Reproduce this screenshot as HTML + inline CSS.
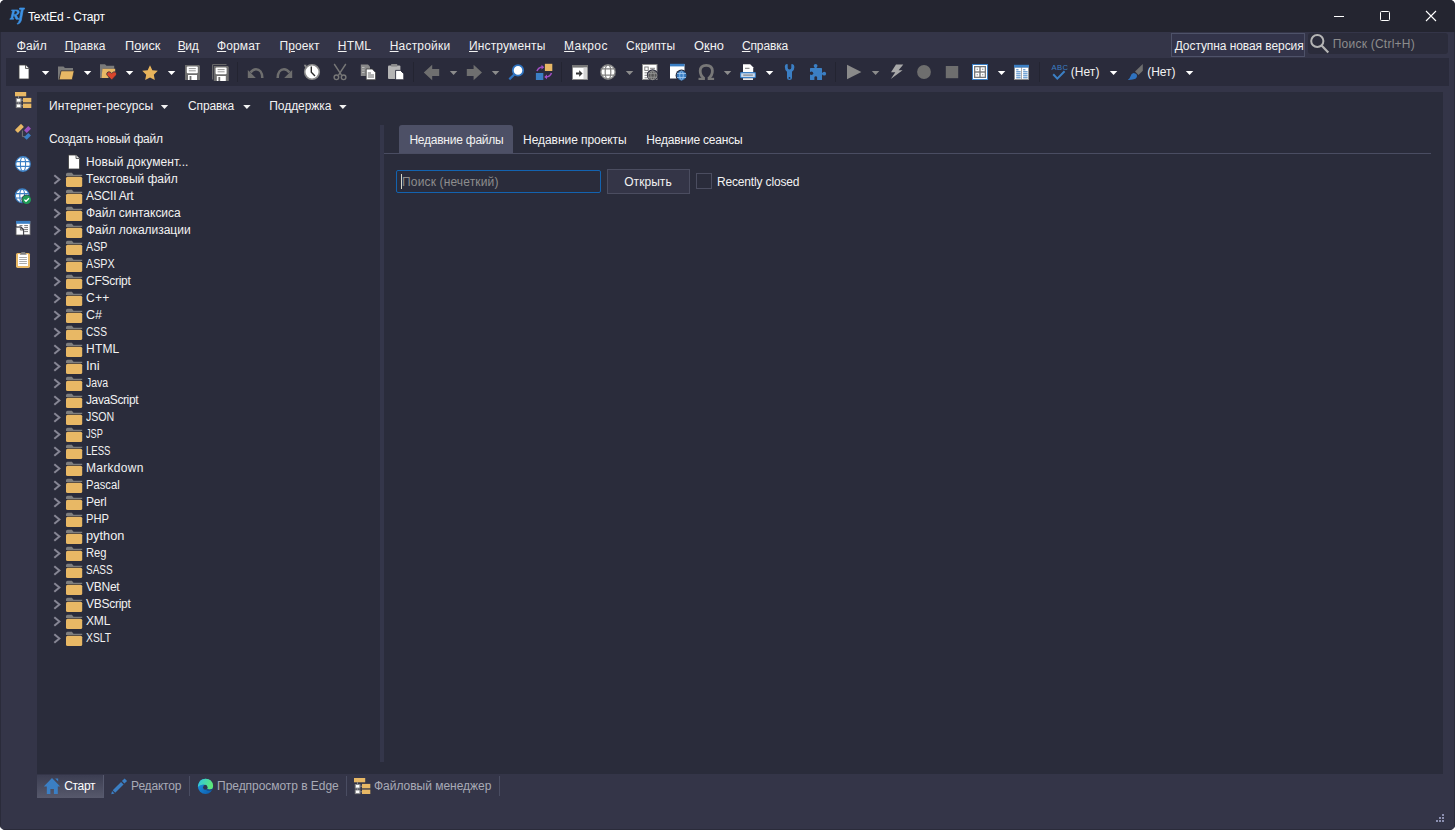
<!DOCTYPE html>
<html><head><meta charset="utf-8"><style>
*{box-sizing:border-box;margin:0;padding:0}
html,body{width:1455px;height:830px;overflow:hidden;background:#ffffff}
body{font-family:"Liberation Sans",sans-serif;font-size:12px;position:relative}
.a{position:absolute}
.t{position:absolute;white-space:pre;line-height:14px;font-size:12px}
.ul{text-decoration:underline;text-underline-offset:1px;text-decoration-thickness:1px}
#win{position:absolute;left:0;top:0;width:1455px;height:830px;background:#343548;border-radius:5px;overflow:hidden}
</style></head><body>
<div id="win">
<div class="a" style="left:0px;top:0px;width:1455px;height:32px;background:#242530;"></div>
<div class="a" style="left:0px;top:32px;width:1px;height:798px;background:#2a2b3a;"></div>
<div class="a" style="left:1454px;top:32px;width:1px;height:798px;background:#2a2b3a;"></div>
<div class="a" style="left:0px;top:829px;width:1455px;height:1px;background:#2a2b3a;"></div>
<div class="a" style="left:6px;top:58px;width:1443px;height:28px;background:#2a2b3b;"></div>
<div class="a" style="left:1171px;top:33px;width:134px;height:24px;background:#33344a;border:1px solid #4e5269;"></div>
<div class="a" style="left:1308px;top:33px;width:140px;height:21px;background:#2b2c3b;border-radius:3px;"></div>
<div class="a" style="left:37px;top:92px;width:1406px;height:682px;background:#2a2c3b;"></div>
<div class="a" style="left:380px;top:125px;width:4px;height:637px;background:#34364a;"></div>
<div class="a" style="left:384px;top:153px;width:1047px;height:1px;background:#4a4d62;"></div>
<div class="a" style="left:399px;top:125px;width:114px;height:28px;background:#4d5066;border-radius:3px 3px 0 0;"></div>
<div class="a" style="left:396px;top:170px;width:205px;height:23px;background:#2a2c3b;border:1px solid #1363b0;border-radius:2px;"></div>
<div class="a" style="left:401px;top:174px;width:1px;height:15px;background:#d8d8c8;"></div>
<div class="a" style="left:607px;top:169px;width:83px;height:25px;background:#343547;border:1px solid #4b4d60;"></div>
<div class="a" style="left:696px;top:173px;width:16px;height:16px;background:#2a2c3b;border:1px solid #4b4d60;"></div>
<div class="a" style="left:37px;top:775px;width:67px;height:23px;background:#4a4c5f;background:linear-gradient(#3c3e52,#57596c);"></div>
<div class="a" style="left:103px;top:775px;width:1px;height:23px;background:#56596e;"></div>
<div class="a" style="left:189px;top:776px;width:1px;height:20px;background:#4a4d62;"></div>
<div class="a" style="left:346px;top:776px;width:1px;height:20px;background:#4a4d62;"></div>
<div class="a" style="left:499px;top:776px;width:1px;height:20px;background:#4a4d62;"></div>
<svg class="a" style="left:0;top:0" width="1455" height="830"><path fill-rule="evenodd" fill="#3d93e6" stroke="#3d93e6" stroke-width="0.6" d="M11.6,9.9 L17.3,9.9 Q19.6,10.1 19.3,12.3 Q18.9,14.6 16.3,15 L18.2,18.5 L19.1,18.6 L18.9,19.3 L16,19.3 L14.1,15.2 L13.5,15.2 L12.8,18.5 L13.9,18.6 L13.7,19.3 L9.8,19.3 L10,18.6 L10.9,18.5 L12.6,10.7 L11.5,10.6 Z M14.6,10.8 L13.7,14.4 L15.1,14.4 Q17.1,14.2 17.3,12.4 Q17.4,10.8 15.9,10.8 Z"/><path fill="#3d93e6" stroke="#3d93e6" stroke-width="0.7" d="M19.6,8 L24.6,8 L24.3,9.3 L23.3,9.4 L21.2,20.8 Q20.5,23.4 17.6,24.2 L17.2,23.5 Q18.9,22.4 19.3,20.4 L21.3,9.4 L19.4,9.3 Z"/><rect x="1334" y="16" width="10" height="1" fill="#fff"/><rect x="1380.5" y="11.5" width="9" height="9" rx="1" fill="none" stroke="#fff" stroke-width="1"/><path d="M1426,11 L1436,21 M1436,11 L1426,21" stroke="#fff" stroke-width="1.1"/><circle cx="1317.3" cy="41" r="6.1" fill="none" stroke="#b4b4b4" stroke-width="2"/><line x1="1321.6" y1="45.5" x2="1328.3" y2="52.4" stroke="#b4b4b4" stroke-width="2.2"/><line x1="237.5" y1="62" x2="237.5" y2="82" stroke="#232431" stroke-width="1"/><line x1="413.5" y1="62" x2="413.5" y2="82" stroke="#232431" stroke-width="1"/><line x1="561.5" y1="62" x2="561.5" y2="82" stroke="#232431" stroke-width="1"/><line x1="835.5" y1="62" x2="835.5" y2="82" stroke="#232431" stroke-width="1"/><line x1="1039.5" y1="62" x2="1039.5" y2="82" stroke="#232431" stroke-width="1"/><path d="M19,65 H25.5 L29,68.5 V79 H19 Z" fill="#fff" stroke="#3c3c3c" stroke-width="0.8"/><path d="M25.5,65 V68.5 H29" fill="#e8e8e8" stroke="#555" stroke-width="0.9"/><polygon points="41.8,71 49.3,71 45.55,75" fill="#ffffff"/><polygon points="83.8,71 91.3,71 87.55,75" fill="#ffffff"/><polygon points="125.8,71 133.3,71 129.55,75" fill="#ffffff"/><polygon points="167.8,71 175.3,71 171.55,75" fill="#ffffff"/><polygon points="765.8,71 773.3,71 769.55,75" fill="#ffffff"/><polygon points="997.8,71 1005.3,71 1001.55,75" fill="#ffffff"/><polygon points="1109.8,71 1117.3,71 1113.55,75" fill="#ffffff"/><polygon points="1185.8,71 1193.3,71 1189.55,75" fill="#ffffff"/><polygon points="449.8,71 457.3,71 453.55,75" fill="#8c8c8c"/><polygon points="491.8,71 499.3,71 495.55,75" fill="#8c8c8c"/><polygon points="625.8,71 633.3,71 629.55,75" fill="#8c8c8c"/><polygon points="723.8,71 731.3,71 727.55,75" fill="#8c8c8c"/><polygon points="871.8,71 879.3,71 875.55,75" fill="#8c8c8c"/><path d="M58,66.5 H63.5 L65,68 H73 V71 H61.2 L59.2,79.8 H58 Z" fill="#7a7a7a"/><path d="M61,70.8 H74.2 L72.2,79.8 H59 Z" fill="#e8b865" stroke="#22232f" stroke-width="0.7"/><path d="M100,64.3 H105 L106.5,65.8 H114.2 V68.8 H102.6 L101.6,78 H100 Z" fill="#7a7a7a"/><path d="M102.4,68.8 H115.2 V72 L108,78 H101.5 Z" fill="#e8b865"/><path d="M111.7,80 L107.4,75.6 Q106.2,74.2 107,72.8 Q108,71.5 109.7,71.9 Q110.9,72.3 111.7,73.4 Q112.5,72.3 113.7,71.9 Q115.4,71.5 116.3,72.8 Q117.1,74.2 115.9,75.6 Z" fill="#d8452b" stroke="#2a2b3b" stroke-width="0.8"/><polygon points="150.00,65.20 152.35,70.16 157.80,70.87 153.80,74.64 154.82,80.03 150.00,77.40 145.18,80.03 146.20,74.64 142.20,70.87 147.65,70.16" fill="#e8b45c"/><path d="M185,65 H199 L200,66 V80 H185 Z" fill="#6e6e6e"/><rect x="186.8" y="66.5" width="11" height="6.8" rx="1" fill="#fff"/><line x1="188.8" y1="68.6" x2="195.8" y2="68.6" stroke="#8a8a8a" stroke-width="0.9"/><line x1="188.8" y1="70.8" x2="195.8" y2="70.8" stroke="#8a8a8a" stroke-width="0.9"/><rect x="188" y="75" width="9" height="5" fill="#fff"/><rect x="189.6" y="76" width="1.8" height="4" fill="#6e6e6e"/><path d="M212.6,79.5 V64.6 H226.5" fill="none" stroke="#6e6e6e" stroke-width="1"/><path d="M213.8,66 H227.8 L228.8,67 V81 H213.8 Z" fill="#6e6e6e"/><rect x="215.60000000000002" y="67.5" width="11" height="6.8" rx="1" fill="#fff"/><line x1="217.60000000000002" y1="69.6" x2="224.60000000000002" y2="69.6" stroke="#8a8a8a" stroke-width="0.9"/><line x1="217.60000000000002" y1="71.8" x2="224.60000000000002" y2="71.8" stroke="#8a8a8a" stroke-width="0.9"/><rect x="216.8" y="76" width="9" height="5" fill="#fff"/><rect x="218.4" y="77" width="1.8" height="4" fill="#6e6e6e"/><g><path d="M262.3,78 C262.3,72.5 259.5,69.3 256,69.3 C253.5,69.3 251.8,70.8 250.5,72.6" fill="none" stroke="#6e6e6e" stroke-width="2.6"/><polygon points="247.8,70 247.8,78 255.8,78" fill="#6e6e6e"/></g><g transform="translate(540,0) scale(-1,1)"><path d="M262.3,78 C262.3,72.5 259.5,69.3 256,69.3 C253.5,69.3 251.8,70.8 250.5,72.6" fill="none" stroke="#6e6e6e" stroke-width="2.6"/><polygon points="247.8,70 247.8,78 255.8,78" fill="#6e6e6e"/></g><circle cx="312" cy="72" r="7.3" fill="#fff" stroke="#8a8a8a" stroke-width="1.6"/><path d="M311.3,66.5 V72.3 L315,76" fill="none" stroke="#2a2a2a" stroke-width="1.4"/><path d="M303.8,64.8 L306.5,64.8 L305.5,68.5 Z" fill="#8a8a8a"/><path d="M334.2,64 L341.5,75.2 M345.8,64 L338.5,75.2" stroke="#777" stroke-width="1.4"/><circle cx="336.4" cy="77.3" r="2.3" fill="none" stroke="#777" stroke-width="1.4"/><circle cx="343.6" cy="77.3" r="2.3" fill="none" stroke="#777" stroke-width="1.4"/><path d="M360.8,64.5 H368 L370,66.5 V76 H360.8 Z" fill="#8a8a8a"/><line x1="362" y1="67.5" x2="364.5" y2="67.5" stroke="#bbb"/><line x1="362" y1="70" x2="364.5" y2="70" stroke="#bbb"/><line x1="362" y1="72.5" x2="364.5" y2="72.5" stroke="#bbb"/><path d="M366.2,69 H372.2 L375.6,72.4 V79.8 H366.2 Z" fill="#fff" stroke="#3a3a3a" stroke-width="0.8"/><path d="M367.8,73 H371 M367.8,75 H374 M367.8,77 H374" stroke="#555" stroke-width="0.9"/><rect x="388" y="65.5" width="12.4" height="13.5" rx="1" fill="#b4b4b4"/><rect x="391.2" y="64" width="6" height="2.6" fill="#8a8a8a"/><path d="M395.6,70.4 H400.4 L403.8,73.8 V79.8 H395.6 Z" fill="#fff" stroke="#2a2b3b" stroke-width="0.9"/><polygon points="423.8,72.5 432.2,64.8 432.2,69 439.2,69 439.2,76 432.2,76 432.2,80.2" fill="#6f6f6f"/><polygon points="482,72.5 473.6,64.8 473.6,69 466.8,69 466.8,76 473.6,76 473.6,80.2" fill="#6f6f6f"/><line x1="509.3" y1="79.4" x2="514.6" y2="74.1" stroke="#2f73c0" stroke-width="2.2"/><circle cx="518" cy="70.4" r="5.2" fill="#fff" stroke="#2f73c0" stroke-width="1.8"/><rect x="544.9" y="63.8" width="7.4" height="7.2" fill="#e8b865"/><rect x="535.9" y="73" width="7.4" height="7" fill="#3b7fc4"/><path d="M537,71 Q538.5,67.3 542.3,67" fill="none" stroke="#a14fc4" stroke-width="1.6"/><polygon points="541.5,64.8 544.3,67.2 541.5,69.4" fill="#a14fc4"/><path d="M551.5,73 Q550,76.7 546.2,77" fill="none" stroke="#a14fc4" stroke-width="1.6"/><polygon points="547,74.6 544.2,77 547,79.2" fill="#a14fc4"/><rect x="572.5" y="65.5" width="15" height="14" fill="#fff" stroke="#8a8a8a" stroke-width="1"/><rect x="572" y="65" width="16" height="2.6" fill="#777"/><rect x="583.5" y="67.6" width="3.6" height="11.5" fill="#d4d4d4"/><rect x="576" y="72.5" width="3.5" height="2" fill="#333"/><polygon points="579.2,70.2 582.6,73.5 579.2,76.8" fill="#333"/><circle cx="608" cy="72" r="7.10" fill="#fff" stroke="#8a8a8a" stroke-width="1.4"/><ellipse cx="608" cy="72" rx="2.81" ry="7.20" fill="none" stroke="#808080" stroke-width="1.2"/><path d="M600.70,68.88 H615.30 M600.70,75.12 H615.30" stroke="#808080" stroke-width="1.2"/><rect x="642.5" y="64.5" width="14.5" height="15" fill="#fff" stroke="#8a8a8a" stroke-width="1"/><rect x="644.8" y="67" width="3.4" height="3.4" fill="none" stroke="#777" stroke-width="0.9"/><path d="M650,68.3 H655 M644.5,72.8 H650 M644.5,75.3 H648.5 M644.5,77.8 H648.5" stroke="#777" stroke-width="0.9"/><circle cx="652.6" cy="75" r="5.8" fill="#2a2b3b"/><circle cx="652.6" cy="75.3" r="4.40" fill="#555" stroke="#8a8a8a" stroke-width="1"/><ellipse cx="652.6" cy="75.3" rx="1.76" ry="4.30" fill="none" stroke="#9a9a9a" stroke-width="0.8"/><path d="M648.20,73.34 H657.00 M648.20,77.26 H657.00" stroke="#9a9a9a" stroke-width="0.8"/><rect x="670" y="64" width="14.5" height="14.5" fill="#fff"/><rect x="670" y="63.8" width="14.5" height="2.6" fill="#3b7fc4"/><circle cx="681.5" cy="75.5" r="5.9" fill="#2a2b3b"/><circle cx="681.5" cy="75.5" r="4.50" fill="#3b7fc4" stroke="#2f6fb0" stroke-width="1"/><ellipse cx="681.5" cy="75.5" rx="1.80" ry="4.40" fill="none" stroke="#a8cbf0" stroke-width="0.8"/><path d="M677.00,73.50 H686.00 M677.00,77.50 H686.00" stroke="#a8cbf0" stroke-width="0.8"/><path d="M704.3,78.6 Q700.1,75.6 700.2,70.8 Q700.4,65.3 706.3,65.3 Q712.2,65.3 712.4,70.8 Q712.5,75.6 708.3,78.6" fill="none" stroke="#787878" stroke-width="2.8"/><rect x="698.5" y="77.8" width="6.4" height="2.2" fill="#787878"/><rect x="707.7" y="77.8" width="6.4" height="2.2" fill="#787878"/><path d="M743,64.3 H750.2 L753.2,67.3 V72 H743 Z" fill="#fff"/><path d="M745,68.3 H749.5" stroke="#666" stroke-width="0.9"/><rect x="740.6" y="72.6" width="14.8" height="5" rx="0.8" fill="#c9d9ec" stroke="#3b7fc4" stroke-width="1.1"/><path d="M743.2,75.1 H752.8" stroke="#777" stroke-width="1"/><rect x="743" y="78.3" width="10" height="1.6" fill="#fff"/><path d="M784.8,66.8 Q784.8,64.3 786.8,64 L787.7,64.2 V67.8 Q787.7,69.5 789.5,69.5 Q791.3,69.5 791.3,67.8 V64.2 L792.3,64 Q794.4,64.3 794.4,67 Q794.4,70.4 792,71.8 V78 Q792,80 789.5,80 Q787,80 787,78 V71.8 Q784.8,70.4 784.8,66.8 Z" fill="#3b7fc4"/><circle cx="789.5" cy="77.9" r="0.9" fill="#2a2b3b"/><rect x="810" y="68" width="12" height="12" rx="0.6" fill="#3b7fc4"/><circle cx="815.6" cy="65.8" r="1.9" fill="#3b7fc4"/><rect x="814.7" y="66.5" width="1.8" height="2" fill="#3b7fc4"/><circle cx="824.2" cy="73.7" r="1.9" fill="#3b7fc4"/><rect x="821.5" y="72.9" width="2" height="1.6" fill="#3b7fc4"/><circle cx="811.4" cy="73.2" r="1.8" fill="#2a2b3b"/><path d="M814.4,80 V77.6 Q814.4,76.3 815.75,76.3 Q817.1,76.3 817.1,77.6 V80 Z" fill="#2a2b3b"/><polygon points="847,64.8 861.4,72 847,79.2" fill="#8a8a8a"/><path d="M896,64.6 H903.3 L898.6,70.2 H902.6 L890.8,79 L895.3,72.3 H891 Z" fill="#a8a8a8"/><circle cx="924" cy="72" r="6.9" fill="#6e6e6e"/><rect x="945.8" y="66" width="12.4" height="12.2" fill="#6e6e6e"/><rect x="972" y="64" width="16" height="16" fill="#3b7fc4"/><rect x="973" y="65" width="14" height="14" fill="#fff"/><rect x="974" y="66" width="12" height="12" fill="#777"/><rect x="975.3" y="67.3" width="4" height="4" fill="#fff"/><rect x="976.5999999999999" y="68.6" width="1.4" height="1.4" fill="#aaa"/><rect x="975.3" y="72.7" width="4" height="4" fill="#fff"/><rect x="976.5999999999999" y="74.0" width="1.4" height="1.4" fill="#aaa"/><rect x="980.7" y="67.3" width="4" height="4" fill="#fff"/><rect x="982.0" y="68.6" width="1.4" height="1.4" fill="#aaa"/><rect x="980.7" y="72.7" width="4" height="4" fill="#fff"/><rect x="982.0" y="74.0" width="1.4" height="1.4" fill="#aaa"/><rect x="1014" y="65" width="15" height="15" fill="#8a8a8a"/><rect x="1015" y="67.5" width="6.2" height="11.5" fill="#fff"/><rect x="1021.9" y="67.5" width="6.2" height="11.5" fill="#fff"/><rect x="1014" y="64.8" width="15" height="2.7" fill="#3b7fc4"/><rect x="1016.2" y="69.3" width="2.3" height="1" fill="#3b7fc4"/><rect x="1023.1" y="69.3" width="2.3" height="1" fill="#3b7fc4"/><rect x="1016.2" y="71.3" width="4.5" height="1" fill="#3b7fc4"/><rect x="1023.1" y="71.3" width="4.5" height="1" fill="#3b7fc4"/><rect x="1016.2" y="73.3" width="4.5" height="1" fill="#3b7fc4"/><rect x="1023.1" y="73.3" width="4.5" height="1" fill="#3b7fc4"/><rect x="1016.2" y="75.3" width="4.5" height="1" fill="#3b7fc4"/><rect x="1023.1" y="75.3" width="4.5" height="1" fill="#3b7fc4"/><rect x="1016.2" y="77.3" width="4.5" height="1" fill="#3b7fc4"/><rect x="1023.1" y="77.3" width="4.5" height="1" fill="#3b7fc4"/><text x="1051.5" y="70.2" font-family="Liberation Sans" font-size="7.6" letter-spacing="0.45" fill="#3b7fc4">ABC</text><path d="M1053.2,74.3 L1057.3,78.6 L1064.6,71.3" fill="none" stroke="#3b7fc4" stroke-width="2"/><polygon points="1142.8,64 1142.8,70.7 1138.5,74.9 1135,71.4" fill="#6f6f6f"/><path d="M1133.5,73 Q1135.6,73 1136.9,74.8 Q1137.6,77 1135.5,78.8 Q1133,80 1127.8,79.9 Q1130,78.3 1130.5,76.2 Q1131.3,73.3 1133.5,73 Z" fill="#2f73c0"/><polygon points="160.8,105 168.20000000000002,105 164.5,109" fill="#f2f2f2"/><polygon points="243.2,105 250.6,105 246.89999999999998,109" fill="#f2f2f2"/><polygon points="339.2,105 346.59999999999997,105 342.9,109" fill="#f2f2f2"/><rect x="15" y="92" width="11.2" height="4.3" fill="#e8b865"/><line x1="18.5" y1="96" x2="18.5" y2="106" stroke="#8a8a8a" stroke-width="1"/><rect x="16.3" y="98.5" width="4.6" height="3.6" fill="#fff" stroke="#8a8a8a" stroke-width="1"/><rect x="16.3" y="104" width="4.6" height="3.6" fill="#fff" stroke="#8a8a8a" stroke-width="1"/><line x1="21" y1="100.2" x2="23" y2="100.2" stroke="#8a8a8a"/><line x1="21" y1="105.8" x2="23" y2="105.8" stroke="#8a8a8a"/><rect x="23" y="97.9" width="8.3" height="4.4" fill="#e8b865"/><rect x="23" y="103.6" width="8.3" height="4.4" fill="#e8b865"/><path d="M22.4,130.5 V136.6 H25" fill="none" stroke="#777" stroke-width="1"/><rect x="15.15" y="126.3" width="8.6" height="4.2" rx="0.6" transform="rotate(-45 19.45 128.4)" fill="#e8b865"/><rect x="24.5" y="127.6" width="6" height="3.8" transform="rotate(-45 27.5 129.5)" fill="#9d52bf"/><rect x="24.5" y="134.5" width="6" height="3.8" transform="rotate(-45 27.5 136.4)" fill="#3b7fc4"/><circle cx="23" cy="164" r="7.3" fill="#fff" stroke="#3b7fc4" stroke-width="1.2"/><ellipse cx="23" cy="164" rx="2.6" ry="7" fill="none" stroke="#3b7fc4" stroke-width="1.1"/><path d="M16,161.6 H30 M16,166.4 H30" stroke="#3b7fc4" stroke-width="1.1"/><circle cx="22.2" cy="195.8" r="6.9" fill="#fff" stroke="#3b7fc4" stroke-width="1.2"/><ellipse cx="22.2" cy="195.8" rx="2.4" ry="6.6" fill="none" stroke="#3b7fc4" stroke-width="1.1"/><path d="M16,193.6 H28.5 M16,198 H28.5" stroke="#3b7fc4" stroke-width="1.1"/><circle cx="26.6" cy="199.6" r="5.2" fill="#343548"/><circle cx="26.6" cy="199.6" r="4.4" fill="#1f9d57"/><path d="M24.4,199.6 L26,201.3 L29,198.2" fill="none" stroke="#fff" stroke-width="1.3"/><rect x="16.4" y="221.5" width="13.6" height="13.2" fill="#fff" stroke="#8a8a8a" stroke-width="0.8"/><rect x="16" y="220.9" width="14.2" height="2.9" fill="#3b7fc4"/><path d="M24.2,225.6 H28 M24.2,227.6 H28 M24.2,229.6 H28 M24.2,231.6 H28 M19.5,225.6 H22.5" stroke="#777" stroke-width="1"/><path d="M15.7,227 H21 L23.6,229.6 V235.4 H15.7 Z" fill="#fff" stroke="#2a2b3b" stroke-width="1.1"/><path d="M15.9,227.2 H20.9 L23.4,229.7 V235.2 H15.9 Z" fill="none" stroke="#666" stroke-width="0.5"/><path d="M20.4,227.4 V230.1 H23.2 Z" fill="#c4c4c4" stroke="#555" stroke-width="0.8"/><rect x="16" y="252.9" width="14" height="15" rx="1.6" fill="#e8b865"/><rect x="18" y="254.1" width="10" height="11.9" fill="#fff"/><rect x="19.2" y="257" width="7.7" height="1" fill="#aaa"/><rect x="19.2" y="259" width="7.7" height="1" fill="#aaa"/><rect x="19.2" y="261" width="7.7" height="1" fill="#aaa"/><rect x="19.2" y="263" width="7.7" height="1" fill="#aaa"/><path d="M19.7,254.7 L21.6,251.9 H24.9 L26.8,254.7 Z" fill="#808080"/><path d="M68.5,155 H76 L79.5,158.5 V169 H68.5 Z" fill="#fff" stroke="#3c3c3c" stroke-width="0.8"/><path d="M76,155 V158.5 H79.5" fill="#e6e6e6" stroke="#555" stroke-width="0.9"/><polyline points="54.3,175.2 59.4,179.5 54.3,183.8" fill="none" stroke="#868694" stroke-width="2"/><path d="M66,174.3 Q66,172.8 67.6,172.8 H71.9 L73.5,174.8 H82.2 V175.9 H66 Z" fill="#7e7e7e"/><rect x="66" y="176.8" width="16.2" height="10.3" rx="1.5" fill="#e8b865"/><polyline points="54.3,192.2 59.4,196.5 54.3,200.8" fill="none" stroke="#868694" stroke-width="2"/><path d="M66,191.3 Q66,189.8 67.6,189.8 H71.9 L73.5,191.8 H82.2 V192.9 H66 Z" fill="#7e7e7e"/><rect x="66" y="193.8" width="16.2" height="10.3" rx="1.5" fill="#e8b865"/><polyline points="54.3,209.2 59.4,213.5 54.3,217.8" fill="none" stroke="#868694" stroke-width="2"/><path d="M66,208.3 Q66,206.8 67.6,206.8 H71.9 L73.5,208.8 H82.2 V209.9 H66 Z" fill="#7e7e7e"/><rect x="66" y="210.8" width="16.2" height="10.3" rx="1.5" fill="#e8b865"/><polyline points="54.3,226.2 59.4,230.5 54.3,234.8" fill="none" stroke="#868694" stroke-width="2"/><path d="M66,225.3 Q66,223.8 67.6,223.8 H71.9 L73.5,225.8 H82.2 V226.9 H66 Z" fill="#7e7e7e"/><rect x="66" y="227.8" width="16.2" height="10.3" rx="1.5" fill="#e8b865"/><polyline points="54.3,243.2 59.4,247.5 54.3,251.8" fill="none" stroke="#868694" stroke-width="2"/><path d="M66,242.3 Q66,240.8 67.6,240.8 H71.9 L73.5,242.8 H82.2 V243.9 H66 Z" fill="#7e7e7e"/><rect x="66" y="244.8" width="16.2" height="10.3" rx="1.5" fill="#e8b865"/><polyline points="54.3,260.2 59.4,264.5 54.3,268.8" fill="none" stroke="#868694" stroke-width="2"/><path d="M66,259.3 Q66,257.8 67.6,257.8 H71.9 L73.5,259.8 H82.2 V260.9 H66 Z" fill="#7e7e7e"/><rect x="66" y="261.8" width="16.2" height="10.3" rx="1.5" fill="#e8b865"/><polyline points="54.3,277.2 59.4,281.5 54.3,285.8" fill="none" stroke="#868694" stroke-width="2"/><path d="M66,276.3 Q66,274.8 67.6,274.8 H71.9 L73.5,276.8 H82.2 V277.9 H66 Z" fill="#7e7e7e"/><rect x="66" y="278.8" width="16.2" height="10.3" rx="1.5" fill="#e8b865"/><polyline points="54.3,294.2 59.4,298.5 54.3,302.8" fill="none" stroke="#868694" stroke-width="2"/><path d="M66,293.3 Q66,291.8 67.6,291.8 H71.9 L73.5,293.8 H82.2 V294.9 H66 Z" fill="#7e7e7e"/><rect x="66" y="295.8" width="16.2" height="10.3" rx="1.5" fill="#e8b865"/><polyline points="54.3,311.2 59.4,315.5 54.3,319.8" fill="none" stroke="#868694" stroke-width="2"/><path d="M66,310.3 Q66,308.8 67.6,308.8 H71.9 L73.5,310.8 H82.2 V311.9 H66 Z" fill="#7e7e7e"/><rect x="66" y="312.8" width="16.2" height="10.3" rx="1.5" fill="#e8b865"/><polyline points="54.3,328.2 59.4,332.5 54.3,336.8" fill="none" stroke="#868694" stroke-width="2"/><path d="M66,327.3 Q66,325.8 67.6,325.8 H71.9 L73.5,327.8 H82.2 V328.9 H66 Z" fill="#7e7e7e"/><rect x="66" y="329.8" width="16.2" height="10.3" rx="1.5" fill="#e8b865"/><polyline points="54.3,345.2 59.4,349.5 54.3,353.8" fill="none" stroke="#868694" stroke-width="2"/><path d="M66,344.3 Q66,342.8 67.6,342.8 H71.9 L73.5,344.8 H82.2 V345.9 H66 Z" fill="#7e7e7e"/><rect x="66" y="346.8" width="16.2" height="10.3" rx="1.5" fill="#e8b865"/><polyline points="54.3,362.2 59.4,366.5 54.3,370.8" fill="none" stroke="#868694" stroke-width="2"/><path d="M66,361.3 Q66,359.8 67.6,359.8 H71.9 L73.5,361.8 H82.2 V362.9 H66 Z" fill="#7e7e7e"/><rect x="66" y="363.8" width="16.2" height="10.3" rx="1.5" fill="#e8b865"/><polyline points="54.3,379.2 59.4,383.5 54.3,387.8" fill="none" stroke="#868694" stroke-width="2"/><path d="M66,378.3 Q66,376.8 67.6,376.8 H71.9 L73.5,378.8 H82.2 V379.9 H66 Z" fill="#7e7e7e"/><rect x="66" y="380.8" width="16.2" height="10.3" rx="1.5" fill="#e8b865"/><polyline points="54.3,396.2 59.4,400.5 54.3,404.8" fill="none" stroke="#868694" stroke-width="2"/><path d="M66,395.3 Q66,393.8 67.6,393.8 H71.9 L73.5,395.8 H82.2 V396.9 H66 Z" fill="#7e7e7e"/><rect x="66" y="397.8" width="16.2" height="10.3" rx="1.5" fill="#e8b865"/><polyline points="54.3,413.2 59.4,417.5 54.3,421.8" fill="none" stroke="#868694" stroke-width="2"/><path d="M66,412.3 Q66,410.8 67.6,410.8 H71.9 L73.5,412.8 H82.2 V413.9 H66 Z" fill="#7e7e7e"/><rect x="66" y="414.8" width="16.2" height="10.3" rx="1.5" fill="#e8b865"/><polyline points="54.3,430.2 59.4,434.5 54.3,438.8" fill="none" stroke="#868694" stroke-width="2"/><path d="M66,429.3 Q66,427.8 67.6,427.8 H71.9 L73.5,429.8 H82.2 V430.9 H66 Z" fill="#7e7e7e"/><rect x="66" y="431.8" width="16.2" height="10.3" rx="1.5" fill="#e8b865"/><polyline points="54.3,447.2 59.4,451.5 54.3,455.8" fill="none" stroke="#868694" stroke-width="2"/><path d="M66,446.3 Q66,444.8 67.6,444.8 H71.9 L73.5,446.8 H82.2 V447.9 H66 Z" fill="#7e7e7e"/><rect x="66" y="448.8" width="16.2" height="10.3" rx="1.5" fill="#e8b865"/><polyline points="54.3,464.2 59.4,468.5 54.3,472.8" fill="none" stroke="#868694" stroke-width="2"/><path d="M66,463.3 Q66,461.8 67.6,461.8 H71.9 L73.5,463.8 H82.2 V464.9 H66 Z" fill="#7e7e7e"/><rect x="66" y="465.8" width="16.2" height="10.3" rx="1.5" fill="#e8b865"/><polyline points="54.3,481.2 59.4,485.5 54.3,489.8" fill="none" stroke="#868694" stroke-width="2"/><path d="M66,480.3 Q66,478.8 67.6,478.8 H71.9 L73.5,480.8 H82.2 V481.9 H66 Z" fill="#7e7e7e"/><rect x="66" y="482.8" width="16.2" height="10.3" rx="1.5" fill="#e8b865"/><polyline points="54.3,498.2 59.4,502.5 54.3,506.8" fill="none" stroke="#868694" stroke-width="2"/><path d="M66,497.3 Q66,495.8 67.6,495.8 H71.9 L73.5,497.8 H82.2 V498.9 H66 Z" fill="#7e7e7e"/><rect x="66" y="499.8" width="16.2" height="10.3" rx="1.5" fill="#e8b865"/><polyline points="54.3,515.2 59.4,519.5 54.3,523.8" fill="none" stroke="#868694" stroke-width="2"/><path d="M66,514.3 Q66,512.8 67.6,512.8 H71.9 L73.5,514.8 H82.2 V515.9 H66 Z" fill="#7e7e7e"/><rect x="66" y="516.8" width="16.2" height="10.3" rx="1.5" fill="#e8b865"/><polyline points="54.3,532.2 59.4,536.5 54.3,540.8" fill="none" stroke="#868694" stroke-width="2"/><path d="M66,531.3 Q66,529.8 67.6,529.8 H71.9 L73.5,531.8 H82.2 V532.9 H66 Z" fill="#7e7e7e"/><rect x="66" y="533.8" width="16.2" height="10.3" rx="1.5" fill="#e8b865"/><polyline points="54.3,549.2 59.4,553.5 54.3,557.8" fill="none" stroke="#868694" stroke-width="2"/><path d="M66,548.3 Q66,546.8 67.6,546.8 H71.9 L73.5,548.8 H82.2 V549.9 H66 Z" fill="#7e7e7e"/><rect x="66" y="550.8" width="16.2" height="10.3" rx="1.5" fill="#e8b865"/><polyline points="54.3,566.2 59.4,570.5 54.3,574.8" fill="none" stroke="#868694" stroke-width="2"/><path d="M66,565.3 Q66,563.8 67.6,563.8 H71.9 L73.5,565.8 H82.2 V566.9 H66 Z" fill="#7e7e7e"/><rect x="66" y="567.8" width="16.2" height="10.3" rx="1.5" fill="#e8b865"/><polyline points="54.3,583.2 59.4,587.5 54.3,591.8" fill="none" stroke="#868694" stroke-width="2"/><path d="M66,582.3 Q66,580.8 67.6,580.8 H71.9 L73.5,582.8 H82.2 V583.9 H66 Z" fill="#7e7e7e"/><rect x="66" y="584.8" width="16.2" height="10.3" rx="1.5" fill="#e8b865"/><polyline points="54.3,600.2 59.4,604.5 54.3,608.8" fill="none" stroke="#868694" stroke-width="2"/><path d="M66,599.3 Q66,597.8 67.6,597.8 H71.9 L73.5,599.8 H82.2 V600.9 H66 Z" fill="#7e7e7e"/><rect x="66" y="601.8" width="16.2" height="10.3" rx="1.5" fill="#e8b865"/><polyline points="54.3,617.2 59.4,621.5 54.3,625.8" fill="none" stroke="#868694" stroke-width="2"/><path d="M66,616.3 Q66,614.8 67.6,614.8 H71.9 L73.5,616.8 H82.2 V617.9 H66 Z" fill="#7e7e7e"/><rect x="66" y="618.8" width="16.2" height="10.3" rx="1.5" fill="#e8b865"/><polyline points="54.3,634.2 59.4,638.5 54.3,642.8" fill="none" stroke="#868694" stroke-width="2"/><path d="M66,633.3 Q66,631.8 67.6,631.8 H71.9 L73.5,633.8 H82.2 V634.9 H66 Z" fill="#7e7e7e"/><rect x="66" y="635.8" width="16.2" height="10.3" rx="1.5" fill="#e8b865"/><path d="M43.8,786.5 L52,778 L60.2,786.5 H57.8 V794 H53.9 V789 H50.4 V794 H46.8 V786.5 Z" fill="#3b7fc4"/><polygon points="55.2,778.4 58.2,778.4 58.2,781.6" fill="#3b7fc4"/><g transform="translate(119.2,786.3) rotate(-45)" fill="#3b7fc4"><rect x="-7.4" y="-1.75" width="11.8" height="3.5"/><rect x="5.6" y="-1.75" width="3.8" height="3.5"/><polygon points="-8.4,-1.75 -8.4,1.75 -11.2,0"/></g><defs><linearGradient id="eb" x1="0" y1="0" x2="1" y2="1"><stop offset="0" stop-color="#1f9ae8"/><stop offset="1" stop-color="#0b58a8"/></linearGradient><linearGradient id="eg" x1="0" y1="0" x2="1" y2="0.3"><stop offset="0" stop-color="#2ec3e6"/><stop offset="1" stop-color="#5de878"/></linearGradient></defs><circle cx="205.5" cy="786.4" r="7.6" fill="url(#eb)"/><path d="M198,785.2 Q199.6,778.8 205.6,778.8 Q212.2,778.9 213.1,785.6 Q213.2,789.5 209.6,789.5 Q207,789.4 206.9,787.2 Q206.6,784.3 203.2,784.4 Q199.8,784.6 198,786.8 Z" fill="url(#eg)"/><ellipse cx="205.3" cy="787.2" rx="2.2" ry="2.5" fill="#2e3650"/><path d="M206.6,789.9 Q209.5,790.4 212.3,789.6" fill="none" stroke="#243050" stroke-width="0.8"/><rect x="354" y="778" width="11.2" height="4.3" fill="#e8b865"/><line x1="357.5" y1="782" x2="357.5" y2="792" stroke="#8a8a8a" stroke-width="1"/><rect x="355.3" y="784.5" width="4.6" height="3.6" fill="#fff" stroke="#8a8a8a" stroke-width="1"/><rect x="355.3" y="790" width="4.6" height="3.6" fill="#fff" stroke="#8a8a8a" stroke-width="1"/><line x1="360" y1="786.2" x2="362" y2="786.2" stroke="#8a8a8a"/><line x1="360" y1="791.8" x2="362" y2="791.8" stroke="#8a8a8a"/><rect x="362" y="783.9" width="8.3" height="4.4" fill="#e8b865"/><rect x="362" y="789.6" width="8.3" height="4.4" fill="#e8b865"/><rect x="1442" y="814" width="2" height="2" fill="#8b8fb0"/><rect x="1439" y="817" width="2" height="2" fill="#8b8fb0"/><rect x="1442" y="817" width="2" height="2" fill="#8b8fb0"/><rect x="1436" y="820" width="2" height="2" fill="#8b8fb0"/><rect x="1439" y="820" width="2" height="2" fill="#8b8fb0"/><rect x="1442" y="820" width="2" height="2" fill="#8b8fb0"/></svg>
<div class="t" style="left:28.10px;top:10px;color:#ffffff;letter-spacing:-0.244px;">TextEd - Старт</div>
<div class="t" style="left:16.80px;top:39px;color:#f2f2f2;letter-spacing:0.128px;"><span class="ul">Ф</span>айл</div>
<div class="t" style="left:64.70px;top:39px;color:#f2f2f2;letter-spacing:0.051px;"><span class="ul">П</span>равка</div>
<div class="t" style="left:124.50px;top:39px;color:#f2f2f2;letter-spacing:0.000px;transform:scaleX(1.0631);transform-origin:0 0;">П<span class="ul">о</span>иск</div>
<div class="t" style="left:177.70px;top:39px;color:#f2f2f2;letter-spacing:-0.359px;"><span class="ul">В</span>ид</div>
<div class="t" style="left:216.90px;top:39px;color:#f2f2f2;letter-spacing:0.132px;"><span class="ul">Ф</span>ормат</div>
<div class="t" style="left:279.40px;top:39px;color:#f2f2f2;letter-spacing:0.114px;">П<span class="ul">р</span>оект</div>
<div class="t" style="left:337.80px;top:39px;color:#f2f2f2;letter-spacing:0.176px;"><span class="ul">H</span>TML</div>
<div class="t" style="left:389.70px;top:39px;color:#f2f2f2;letter-spacing:0.207px;"><span class="ul">Н</span>астройки</div>
<div class="t" style="left:469.00px;top:39px;color:#f2f2f2;letter-spacing:0.147px;"><span class="ul">И</span>нструменты</div>
<div class="t" style="left:564.10px;top:39px;color:#f2f2f2;letter-spacing:0.379px;"><span class="ul">М</span>акрос</div>
<div class="t" style="left:626.10px;top:39px;color:#f2f2f2;letter-spacing:0.196px;">Ск<span class="ul">р</span>ипты</div>
<div class="t" style="left:693.80px;top:39px;color:#f2f2f2;letter-spacing:0.000px;transform:scaleX(1.0710);transform-origin:0 0;">О<span class="ul">к</span>но</div>
<div class="t" style="left:741.90px;top:39px;color:#f2f2f2;letter-spacing:-0.113px;"><span class="ul">С</span>правка</div>
<div class="t" style="left:1174.70px;top:39px;color:#f2f2f2;letter-spacing:-0.077px;">Доступна новая версия</div>
<div class="t" style="left:1332.70px;top:37px;color:#8d8d8d;letter-spacing:0.237px;">Поиск (Ctrl+H)</div>
<div class="t" style="left:1070.70px;top:65px;color:#f2f2f2;letter-spacing:0.066px;">(Нет)</div>
<div class="t" style="left:1147.30px;top:65px;color:#f2f2f2;letter-spacing:-0.059px;">(Нет)</div>
<div class="t" style="left:49.00px;top:99px;color:#f2f2f2;letter-spacing:0.088px;">Интернет-ресурсы</div>
<div class="t" style="left:188.10px;top:99px;color:#f2f2f2;letter-spacing:-0.163px;">Справка</div>
<div class="t" style="left:269.30px;top:99px;color:#f2f2f2;letter-spacing:-0.064px;">Поддержка</div>
<div class="t" style="left:49.00px;top:132px;color:#f2f2f2;letter-spacing:-0.202px;">Создать новый файл</div>
<div class="t" style="left:86.00px;top:155px;color:#f2f2f2;letter-spacing:0.086px;">Новый документ...</div>
<div class="t" style="left:86.00px;top:172px;color:#f2f2f2;letter-spacing:-0.027px;">Текстовый файл</div>
<div class="t" style="left:86.00px;top:189px;color:#f2f2f2;letter-spacing:-0.220px;">ASCII Art</div>
<div class="t" style="left:86.00px;top:206px;color:#f2f2f2;letter-spacing:-0.019px;">Файл синтаксиса</div>
<div class="t" style="left:86.00px;top:223px;color:#f2f2f2;letter-spacing:-0.027px;">Файл локализации</div>
<div class="t" style="left:86.00px;top:240px;color:#f2f2f2;letter-spacing:0.000px;transform:scaleX(0.8907);transform-origin:0 0;">ASP</div>
<div class="t" style="left:86.00px;top:257px;color:#f2f2f2;letter-spacing:0.000px;transform:scaleX(0.8963);transform-origin:0 0;">ASPX</div>
<div class="t" style="left:86.00px;top:274px;color:#f2f2f2;letter-spacing:-0.267px;">CFScript</div>
<div class="t" style="left:86.00px;top:291px;color:#f2f2f2;letter-spacing:0.306px;">C++</div>
<div class="t" style="left:86.00px;top:308px;color:#f2f2f2;letter-spacing:0.000px;transform:scaleX(1.0388);transform-origin:0 0;">C#</div>
<div class="t" style="left:86.00px;top:325px;color:#f2f2f2;letter-spacing:0.000px;transform:scaleX(0.8485);transform-origin:0 0;">CSS</div>
<div class="t" style="left:86.00px;top:342px;color:#f2f2f2;letter-spacing:0.209px;">HTML</div>
<div class="t" style="left:86.00px;top:359px;color:#f2f2f2;letter-spacing:0.000px;transform:scaleX(1.0866);transform-origin:0 0;">Ini</div>
<div class="t" style="left:86.00px;top:376px;color:#f2f2f2;letter-spacing:0.000px;transform:scaleX(0.8744);transform-origin:0 0;">Java</div>
<div class="t" style="left:86.00px;top:393px;color:#f2f2f2;letter-spacing:-0.392px;">JavaScript</div>
<div class="t" style="left:86.00px;top:410px;color:#f2f2f2;letter-spacing:0.000px;transform:scaleX(0.8834);transform-origin:0 0;">JSON</div>
<div class="t" style="left:86.00px;top:427px;color:#f2f2f2;letter-spacing:0.000px;transform:scaleX(0.7661);transform-origin:0 0;">JSP</div>
<div class="t" style="left:86.00px;top:444px;color:#f2f2f2;letter-spacing:0.000px;transform:scaleX(0.7983);transform-origin:0 0;">LESS</div>
<div class="t" style="left:86.00px;top:461px;color:#f2f2f2;letter-spacing:0.292px;">Markdown</div>
<div class="t" style="left:86.00px;top:478px;color:#f2f2f2;letter-spacing:0.000px;transform:scaleX(0.9335);transform-origin:0 0;">Pascal</div>
<div class="t" style="left:86.00px;top:495px;color:#f2f2f2;letter-spacing:-0.248px;">Perl</div>
<div class="t" style="left:86.00px;top:512px;color:#f2f2f2;letter-spacing:0.000px;transform:scaleX(0.9288);transform-origin:0 0;">PHP</div>
<div class="t" style="left:86.00px;top:529px;color:#f2f2f2;letter-spacing:0.000px;transform:scaleX(1.0648);transform-origin:0 0;">python</div>
<div class="t" style="left:86.00px;top:546px;color:#f2f2f2;letter-spacing:0.000px;transform:scaleX(0.9326);transform-origin:0 0;">Reg</div>
<div class="t" style="left:86.00px;top:563px;color:#f2f2f2;letter-spacing:0.000px;transform:scaleX(0.8318);transform-origin:0 0;">SASS</div>
<div class="t" style="left:86.00px;top:580px;color:#f2f2f2;letter-spacing:-0.247px;">VBNet</div>
<div class="t" style="left:86.00px;top:597px;color:#f2f2f2;letter-spacing:-0.270px;">VBScript</div>
<div class="t" style="left:86.00px;top:614px;color:#f2f2f2;letter-spacing:-0.144px;">XML</div>
<div class="t" style="left:86.00px;top:631px;color:#f2f2f2;letter-spacing:0.000px;transform:scaleX(0.8604);transform-origin:0 0;">XSLT</div>
<div class="t" style="left:409.40px;top:133px;color:#f2f2f2;letter-spacing:-0.234px;">Недавние файлы</div>
<div class="t" style="left:523.10px;top:133px;color:#f2f2f2;letter-spacing:-0.060px;">Недавние проекты</div>
<div class="t" style="left:646.30px;top:133px;color:#f2f2f2;letter-spacing:-0.191px;">Недавние сеансы</div>
<div class="t" style="left:402.10px;top:175px;color:#8d8d8d;letter-spacing:0.142px;">Поиск (нечеткий)</div>
<div class="t" style="left:624.20px;top:175px;color:#f2f2f2;letter-spacing:0.060px;">Открыть</div>
<div class="t" style="left:716.90px;top:175px;color:#f2f2f2;letter-spacing:-0.151px;">Recently closed</div>
<div class="t" style="left:64.20px;top:779px;color:#ffffff;letter-spacing:-0.327px;">Старт</div>
<div class="t" style="left:131.10px;top:779px;color:#a8aab6;letter-spacing:-0.194px;">Редактор</div>
<div class="t" style="left:217.10px;top:779px;color:#a8aab6;letter-spacing:-0.048px;">Предпросмотр в Edge</div>
<div class="t" style="left:374.00px;top:779px;color:#a8aab6;letter-spacing:-0.018px;">Файловый менеджер</div>
</div>
</body></html>
